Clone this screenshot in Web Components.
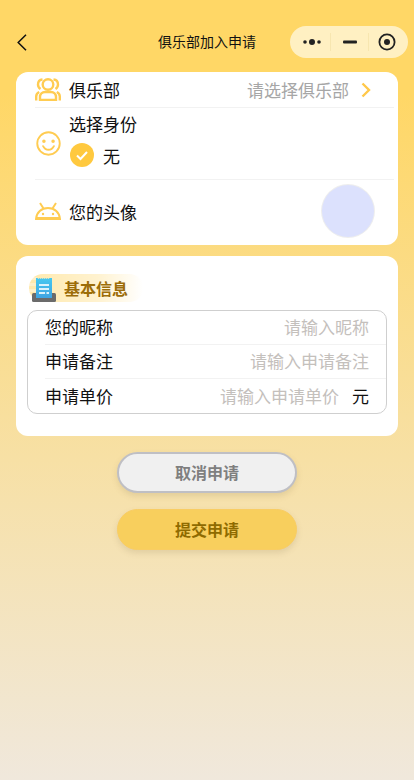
<!DOCTYPE html>
<html lang="zh">
<head>
<meta charset="utf-8">
<title>俱乐部加入申请</title>
<style>
  html, body { margin: 0; height: 100%; }
  body {
    width: 414px;
    height: 780px;
    overflow: hidden;
    background: linear-gradient(180deg, #ffd766 0%, #ffd766 12%, #f0e8dc 100%);
    font-family: "Noto Sans CJK SC", "Liberation Sans", sans-serif;
    color: #111;
  }
</style>
</head>
<body>
<nav-bar title="俱乐部加入申请"></nav-bar>

<info-card style="height:173px">
  <info-row style="height:36px" line>
    <svg slot="icon" width="26" height="23" viewBox="0 0 26 23" fill="none" stroke="#ffcc52" stroke-width="2.400">
      <circle cx="13" cy="6.500" r="5.300"/>
      <path d="M7.500 1.500C4.500 1.800 3 4 3 6.500c0 2 1 3.500 2.500 4.500M18.500 1.500C21.500 1.800 23 4 23 6.500c0 2-1 3.500-2.500 4.500"/>
      <path d="M1.200 22.500v-4c0-2 1-3.500 3-4.500M24.800 22.500v-4c0-2-1-3.500-3-4.500"/>
      <path d="M5 22v-3a5 5 0 0 1 5-5h6a5 5 0 0 1 5 5v3z"/>
    </svg>
    俱乐部
    <span slot="end" style="color:#a6a6a6;display:flex;align-items:center;gap:12px">请选择俱乐部
      <svg width="10" height="16" viewBox="0 0 10 16" fill="none" stroke="#ffc84a" stroke-width="2.400" style="margin-right:23px"><path d="M1.500 1.500 8 8l-6.500 6.500"/></svg>
    </span>
  </info-row>
  <info-row style="height:72px" line>
    <svg slot="icon" width="25" height="25" viewBox="0 0 24 24" fill="none" stroke="#ffcc52" stroke-width="1.800" style="margin-left:1px">
      <circle cx="12" cy="12" r="10.800"/>
      <path d="M6.800 14.500c1.200 2.400 3 3.500 5.200 3.500s4-1.100 5.200-3.500" stroke-linecap="round"/>
      <circle cx="7.600" cy="9.800" r=".8" fill="#ffcc52"/>
      <circle cx="16.400" cy="9.800" r=".8" fill="#ffcc52"/>
    </svg>
    <identity-choice label="选择身份" value="无"></identity-choice>
  </info-row>
  <info-row style="height:65px;padding-bottom:3px">
    <svg slot="icon" width="26" height="18" viewBox="0 0 26 18" fill="#ffcc52">
      <path d="M1 17C1.500 10.500 6.500 6 13 6s11.500 4.500 12 11z" fill="none" stroke="#ffcc52" stroke-width="2"/>
      <path d="M5 1l3.500 5.500M21 1l-3.500 5.500" stroke="#ffcc52" stroke-width="2" fill="none"/>
      <rect x="1" y="15" width="24" height="3"/>
      <circle cx="8" cy="12" r="1.200"/>
      <circle cx="18" cy="12" r="1.200"/>
    </svg>
    您的头像
    <span slot="end" style="display:block;width:52px;height:52px;border-radius:50%;background:#dce1fd;box-shadow:0 0 0 1px #eeeeee;margin-right:20px"></span>
  </info-row>
</info-card>

<info-card style="height:180px;margin-top:11px">
  <section-tag>基本信息</section-tag>
  <form-box>
    <form-row label="您的昵称" hint="请输入昵称" line></form-row>
    <form-row label="申请备注" hint="请输入申请备注" line></form-row>
    <form-row label="申请单价" hint="请输入申请单价" unit="元"></form-row>
  </form-box>
</info-card>

<action-button kind="cancel" style="margin-top:16px">取消申请</action-button>
<action-button kind="submit" style="margin-top:16px">提交申请</action-button>

<script>
  const CJK = '"Noto Sans CJK SC", "Liberation Sans", sans-serif';

  class NavBar extends HTMLElement {
    connectedCallback() {
      this.attachShadow({ mode: "open" });
      this.shadowRoot.innerHTML = `
        <style>
          :host { display: grid; grid-template-columns: 1fr auto 1fr; height: 72px; box-sizing: border-box; padding: 26px 6px 0; font-family: ${CJK}; }
          .back { margin: 8px 0 0 11px; width: 10px; height: 17px; }
          h1 { margin: 0; font-size: 14px; font-weight: 400; line-height: 30px; color: #111; }
          .pill { justify-self: end; width: 118px; height: 32px; border-radius: 16px; background: #fff0c2; display: flex; align-items: center; }
          .pill div { height: 100%; box-sizing: border-box; display: flex; align-items: center; justify-content: center; }
          .a { width: 40px; padding-left: 4px; }
          .b { width: 37px; }
          .c { flex: 1; padding-right: 4px; }
          .pill .sep { width: 1px; height: 18px; background: #f7e6b0; }
        </style>
        <svg class="back" viewBox="0 0 10 17" fill="none" stroke="#111" stroke-width="1.500"><path d="M9 .8 1.200 8.500 9 16.200"/></svg>
        <h1>${this.getAttribute("title")}</h1>
        <div class="pill">
          <div class="a"><svg width="18" height="8" viewBox="0 0 18 8" fill="#222"><circle cx="2" cy="4" r="1.800"/><circle cx="9" cy="4" r="3"/><circle cx="16" cy="4" r="1.800"/></svg></div>
          <div class="sep"></div>
          <div class="b"><svg width="14" height="4" viewBox="0 0 14 4"><rect width="14" height="3" y=".5" rx="1" fill="#222"/></svg></div>
          <div class="sep"></div>
          <div class="c"><svg width="18" height="18" viewBox="0 0 18 18"><circle cx="9" cy="9" r="7.600" fill="none" stroke="#222" stroke-width="1.800"/><circle cx="9" cy="9" r="3" fill="#222"/></svg></div>
        </div>`;
    }
  }

  class InfoCard extends HTMLElement {
    constructor() {
      super();
      this.attachShadow({ mode: "open" });
      this.shadowRoot.innerHTML = `
        <style>
          :host { display: flex; flex-direction: column; box-sizing: border-box; margin: 0 16px; background: #fff; border-radius: 12px; }
        </style>
        <slot></slot>`;
    }
  }

  class InfoRow extends HTMLElement {
    constructor() {
      super();
      this.attachShadow({ mode: "open" });
      this.shadowRoot.innerHTML = `
        <style>
          :host { display: flex; align-items: center; box-sizing: border-box; margin-left: 19px; margin-right: 4px; font-size: 17px; color: #111; }
          :host([line]) { border-bottom: 1px solid #f2f2f2; }
          .icon { flex: none; width: 34px; display: flex; justify-content: flex-start; align-items: center; }
          .main { flex: 1; min-width: 0; }
        </style>
        <div class="icon"><slot name="icon"></slot></div>
        <div class="main"><slot></slot></div>
        <slot name="end"></slot>`;
    }
  }

  class IdentityChoice extends HTMLElement {
    connectedCallback() {
      this.attachShadow({ mode: "open" });
      this.shadowRoot.innerHTML = `
        <style>
          :host { display: flex; flex-direction: column; gap: 7px; padding-bottom: 9px; font-size: 17px; line-height: 25px; }
          .opt { display: flex; align-items: center; gap: 9px; padding-left: 1px; }
          svg { flex: none; }
        </style>
        <div>${this.getAttribute("label")}</div>
        <div class="opt">
          <svg width="24" height="24" viewBox="0 0 24 24"><circle cx="12" cy="12" r="12" fill="#ffc93f"/><path d="M7 12.500l3.500 3.500L17 9" fill="none" stroke="#fff" stroke-width="2"/></svg>
          <span>${this.getAttribute("value")}</span>
        </div>`;
    }
  }

  class SectionTag extends HTMLElement {
    constructor() {
      super();
      this.attachShadow({ mode: "open" });
      this.shadowRoot.innerHTML = `
        <style>
          :host { display: flex; align-self: flex-start; align-items: center; gap: 8px; height: 28px; box-sizing: border-box; margin: 18px 0 0 13px; padding-right: 15px; border-radius: 14px; font-size: 16px; font-weight: 700; color: #9c6d08; background: repeating-linear-gradient(180deg, #ffe9ad 0 3px, #fff0c8 3px 6px) left / 8px 100% no-repeat, linear-gradient(90deg, #ffe9ad 0%, #fff2cf 60%, #ffffff 100%); }
          svg { flex: none; margin: 3px 0 0 3px; }
        </style>
        <svg width="24" height="24" viewBox="0 0 24 24">
          <defs><linearGradient id="t" x1="0" y1="0" x2="0" y2="1"><stop offset="0" stop-color="#45c8f0"/><stop offset="1" stop-color="#3fa4e2"/></linearGradient></defs>
          <rect x="0" y="15" width="24" height="9" rx="1.500" fill="#6b6b6b"/>
          <path d="M4 0h1.500l1 1 1-1 1 1 1-1 1 1 1-1 1 1 1-1 1 1 1-1 1 1 1-1H20v20H4z" fill="url(#t)"/>
          <rect x="7" y="6" width="10" height="2" fill="#d9f2fc"/>
          <rect x="7" y="10" width="10" height="2" fill="#d9f2fc"/>
          <rect x="7" y="14" width="6" height="2" fill="#d9f2fc"/>
          <rect x="14.500" y="14" width="2.500" height="2" fill="#d9f2fc"/>
        </svg>
        <span><slot></slot></span>`;
    }
  }

  class FormBox extends HTMLElement {
    constructor() {
      super();
      this.attachShadow({ mode: "open" });
      this.shadowRoot.innerHTML = `
        <style>
          :host { display: flex; flex-direction: column; box-sizing: border-box; height: 104px; margin: 8px 11px 0 11px; border: 1px solid #cfcfcf; border-radius: 10px; }
        </style>
        <slot></slot>`;
    }
  }

  class FormRow extends HTMLElement {
    connectedCallback() {
      const unit = this.getAttribute("unit");
      this.attachShadow({ mode: "open" });
      this.shadowRoot.innerHTML = `
        <style>
          :host { display: flex; flex: none; height: 34px; align-items: center; box-sizing: border-box; margin-left: 17px; padding: 0 17px 2px 0; font-size: 17px; color: #111; }
          :host([line]) { border-bottom: 1px solid #f2f2f2; }
          .label { flex: 1; }
          .hint { color: #c4c0bc; }
          .unit { margin-left: 13px; }
        </style>
        <span class="label">${this.getAttribute("label")}</span>
        <span class="hint">${this.getAttribute("hint")}</span>
        ${unit ? `<span class="unit">${unit}</span>` : ""}`;
    }
  }

  class ActionButton extends HTMLElement {
    constructor() {
      super();
      this.attachShadow({ mode: "open" });
      this.shadowRoot.innerHTML = `
        <style>
          :host { display: flex; align-items: center; justify-content: center; box-sizing: border-box; width: 180px; height: 41px; margin-left: 117px; padding-bottom: 2px; border-radius: 20.500px; font-size: 16px; font-weight: 700; box-shadow: 0 3px 6px rgba(120, 100, 60, .16); }
          :host([kind="cancel"]) { background: #f0f0f0; border: 2px solid #bfbfc4; color: #7f7f7f; }
          :host([kind="submit"]) { background: #f8cf5d; border: 1px solid #f9cd63; color: #8f6b00; }
        </style>
        <slot></slot>`;
    }
  }

  customElements.define("nav-bar", NavBar);
  customElements.define("info-card", InfoCard);
  customElements.define("info-row", InfoRow);
  customElements.define("identity-choice", IdentityChoice);
  customElements.define("section-tag", SectionTag);
  customElements.define("form-box", FormBox);
  customElements.define("form-row", FormRow);
  customElements.define("action-button", ActionButton);
</script>
</body>
</html>
